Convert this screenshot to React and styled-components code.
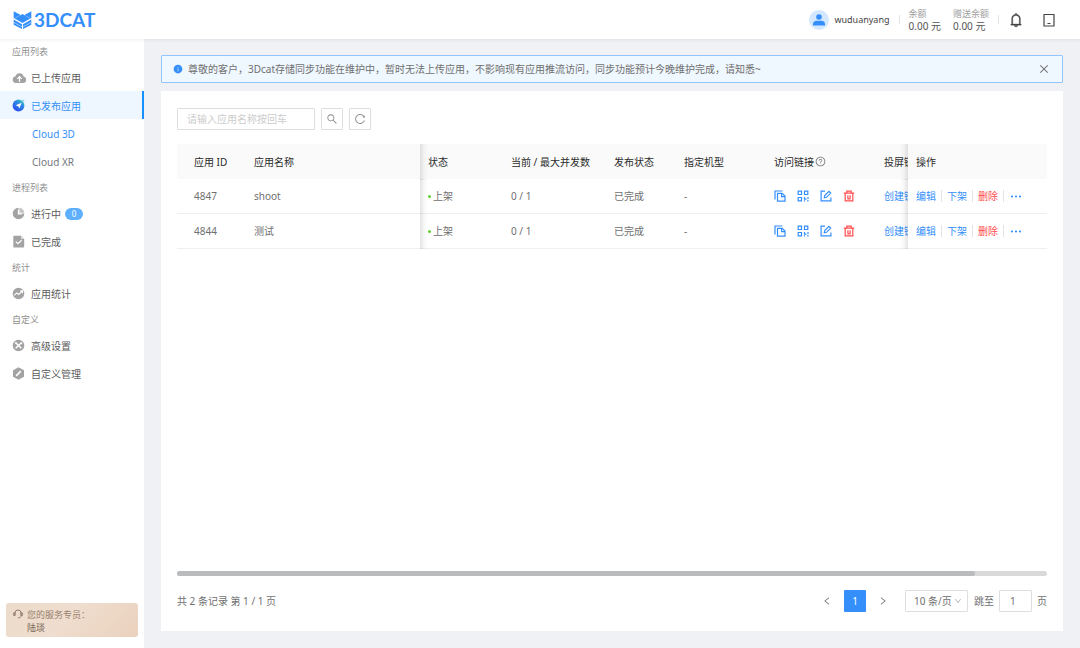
import React from "react";
import styled, { createGlobalStyle, css } from "styled-components";
import {
  AiFillInfoCircle,
  AiOutlineBell,
  AiOutlineClose,
  AiOutlineDown,
  AiOutlineLeft,
  AiOutlineQuestionCircle,
  AiOutlineReload,
  AiOutlineRight,
  AiOutlineSearch,
} from "react-icons/ai";

const blue = "#348ffb";
const red = "#ff4d4f";

const GlobalStyle = createGlobalStyle`
  *, *::before, *::after { box-sizing: border-box; }
  body {
    margin: 0;
    background: #eff1f5;
    color: #707070;
    font-family: "Noto Sans", "Noto Sans CJK SC", sans-serif;
    font-size: 10px;
    line-height: 16px;
  }
  button, input, select { font: inherit; color: inherit; }
  button { border: 0; padding: 0; background: none; cursor: pointer; }
  a { color: inherit; text-decoration: none; }
  svg { display: block; flex: none; }
  h1, h2, ul, p { margin: 0; padding: 0; font: inherit; list-style: none; }
`;

const Page = styled.div`
  display: flex;
  flex-direction: column;
  min-height: 100vh;
`;

const Header = styled.header`
  display: flex;
  align-items: center;
  justify-content: space-between;
  height: 39px;
  padding: 0 23px 0 13px;
  background: #fff;
  box-shadow: 0 1px 3px rgba(0, 21, 41, 0.08);
  z-index: 3;
`;

const Logo = styled.a`
  display: flex;
  align-items: center;
  gap: 2px;
  color: ${blue};
  font: 700 19px/24px Lato, sans-serif;
`;

const HeaderTools = styled.div`
  display: flex;
  align-items: center;
`;

const User = styled.a`
  display: flex;
  align-items: center;
  gap: 5px;
  color: #444;
  font-size: 9px;
`;

const Avatar = styled.span`
  display: grid;
  place-items: center;
  width: 20px;
  height: 20px;
  border-radius: 50%;
  background: #d3e7fe;
  color: ${blue};
`;

const Divider = styled.span`
  flex: none;
  width: 1px;
  height: ${(p) => p.$height || 9}px;
  margin: 0 ${(p) => p.$space}px;
  background: #e4e4e4;
`;

const Balance = styled.dl`
  margin: 0;
  color: #555;
  & + & { margin-left: 12px; }
`;

const BalanceLabel = styled.dt`
  color: #a0a0a0;
  font-size: 9px;
  line-height: 13px;
`;

const BalanceValue = styled.dd`
  margin: 0;
  line-height: 13px;
`;

const ToolButton = styled.button`
  color: #444;
  & + & { margin-left: 17px; }
`;

const Body = styled.div`
  display: flex;
  flex: 1;
`;

const Sidebar = styled.nav`
  display: flex;
  flex-direction: column;
  justify-content: space-between;
  flex: none;
  width: 144px;
  padding-bottom: 11px;
  background: #fff;
`;

const GroupTitle = styled.h2`
  padding: 2px 0 0 12px;
  color: #909090;
  font-size: 9px;
  line-height: 22px;
`;

const MenuLink = styled.a`
  display: flex;
  align-items: center;
  gap: 6px;
  height: 28px;
  padding: 1px 0 0 ${(p) => (p.$sub ? 32 : 12)}px;
  color: ${(p) => (p.$active ? blue : p.$sub ? "#74777d" : "#5c5c5c")};
  ${(p) =>
    p.$active &&
    !p.$sub &&
    css`
      background: #eef7ff;
      border-right: 2px solid #1890ff;
    `}
`;

const IconBox = styled.span`
  display: grid;
  place-items: center;
  width: 13px;
  height: 13px;
`;

const Count = styled.span`
  width: 18px;
  height: 12px;
  margin-left: -2px;
  border-radius: 6px;
  background: #5eb0ff;
  color: #fff;
  font-size: 8px;
  line-height: 12px;
  text-align: center;
`;

const Agent = styled.aside`
  display: flex;
  gap: 4px;
  height: 34px;
  margin: 0 6px;
  padding: 5px 7px;
  border-radius: 3px;
  background: linear-gradient(135deg, #ecdaca 0%, #efdecf 48%, #efdccc 49%, #ead1bd 100%);
  color: #967f6c;
  font-size: 9px;
  line-height: 13px;
`;

const AgentName = styled.p`
  color: #7a6757;
`;

const Main = styled.main`
  display: flex;
  flex: 1;
  flex-direction: column;
  gap: 8px;
  min-width: 0;
  padding: 16px 17px 17px;
`;

const Notice = styled.div`
  display: flex;
  align-items: center;
  gap: 5px;
  height: 28px;
  padding: 0 12px 0 11px;
  border: 1px solid #93c5fa;
  border-radius: 1px;
  background: #eff7ff;
`;

const NoticeText = styled.p`
  flex: 1;
`;

const Card = styled.section`
  display: flex;
  flex: 1;
  flex-direction: column;
  padding: 17px 16px 19px;
  background: #fff;
`;

const Toolbar = styled.form`
  display: flex;
  gap: 6px;
  margin-bottom: 14px;
`;

const box = css`
  height: 22px;
  border: 1px solid #dedede;
  border-radius: 1px;
  background: #fff;
`;

const SearchInput = styled.input`
  ${box}
  width: 138px;
  padding: 0 9px;
  &::placeholder { color: #ccc; }
`;

const SquareButton = styled.button`
  ${box}
  display: grid;
  place-items: center;
  width: 22px;
  color: #8c8c8c;
`;

const TableScroll = styled.div`
  flex: 1;
  overflow: hidden;
`;

const Table = styled.table`
  width: 100%;
  min-width: 950px;
  table-layout: fixed;
  border-spacing: 0;
  text-align: left;
  white-space: nowrap;
`;

const cell = css`
  height: 35px;
  padding: 0 8px;
  &:first-child { padding-left: 17px; }
  ${(p) => p.$fixed && "position: sticky; z-index: 1;"}
  ${(p) => p.$fixed === "id" && "left: 0;"}
  ${(p) =>
    p.$fixed === "name" &&
    css`
      left: 69px;
      &::after {
        content: "";
        position: absolute;
        inset: 0 -8px -1px auto;
        width: 8px;
        background: linear-gradient(90deg, rgba(0, 0, 0, 0.11), rgba(0, 0, 0, 0.03) 50%, transparent);
      }
    `}
  ${(p) =>
    p.$fixed === "actions" &&
    css`
      right: 0;
      &::before {
        content: "";
        position: absolute;
        inset: 0 auto -1px -8px;
        width: 8px;
        background: linear-gradient(270deg, rgba(0, 0, 0, 0.11), rgba(0, 0, 0, 0.03) 50%, transparent);
      }
    `}
`;

const Th = styled.th`
  ${cell}
  background: #fafafa;
  color: #2b2b2b;
  font-weight: 400;
`;

const Td = styled.td`
  ${cell}
  border-bottom: 1px solid #efefef;
  background: #fff;
`;

const Inline = styled.div`
  display: flex;
  align-items: center;
  gap: ${(p) => p.$gap || 0}px;
`;

const Dot = styled.span`
  width: 3px;
  height: 3px;
  border-radius: 50%;
  background: #5fd02e;
`;

const Action = styled.button`
  color: ${(p) => (p.$danger ? red : blue)};
`;

const Track = styled.div`
  height: 5px;
  margin-bottom: 14px;
  border-radius: 3px;
  background: #d9d9d9;
`;

const Thumb = styled.div`
  width: calc(100% * 11 / 12);
  height: 100%;
  border-radius: 3px;
  background: #b9bbbd;
`;

const Footer = styled.footer`
  display: flex;
  align-items: center;
  justify-content: space-between;
`;

const PageButton = styled.button`
  display: grid;
  place-items: center;
  width: 22px;
  height: 22px;
  border-radius: 1px;
  ${(p) => p.$current && `background: ${blue}; color: #fff;`}
`;

const SizePicker = styled.label`
  display: grid;
  align-items: center;
  margin-left: 5px;
  & > * { grid-area: 1 / 1; }
  & > svg {
    justify-self: end;
    margin-right: 6px;
    color: #aaa;
    pointer-events: none;
  }
`;

const Select = styled.select`
  ${box}
  width: 63px;
  padding: 0 8px;
  appearance: none;
`;

const PageInput = styled.input`
  ${box}
  width: 33px;
  margin: 0 5px;
  padding: 0 10px;
`;

const LogoMark = () => (
  <svg width="19" height="18" viewBox="0 0 57 54" fill="currentColor">
    <path d="M2 1 23 12 2 23z" />
    <path d="M55 1v22L34 12z" />
    <path d="M28.500 9 52 22.500 28.500 36 5 22.500z" />
    <path d="M2 25.500 27 39.500V54L2 41z" />
    <path d="M55 25.500 30 39.500V54L55 41z" />
    <path d="M2 34 27 47.500M55 34 30 47.500" stroke="#fff" strokeWidth="1.500" />
  </svg>
);

const gray = "#a3a3a3";

const icons = {
  upload: (
    <svg width="15" height="14" viewBox="0 0 15 14">
      <path d="M3.500 5.200A4.200 4.200 0 0 1 11.600 5.600a3.300 3.300 0 0 1-.4 6.500H3.700A3.500 3.500 0 0 1 3.500 5.200z" fill={gray} />
      <path d="M7.500 11V6M5.300 7.800 7.500 5.600l2.200 2.200" stroke="#fff" strokeWidth="1.200" fill="none" />
    </svg>
  ),
  publish: (
    <svg width="13" height="13" viewBox="0 0 13 13">
      <defs>
        <linearGradient id="publish" x1="1" y1="0" x2="0.300" y2="1">
          <stop offset="0" stopColor="#3ce0b0" />
          <stop offset="0.450" stopColor="#2f86e6" />
          <stop offset="1" stopColor="#2b4ff0" />
        </linearGradient>
      </defs>
      <circle cx="6.500" cy="6.500" r="5.900" fill="url(#publish)" />
      <path d="M9.600 3.800 7.400 9.400 6.200 7.200 3.600 6.200z" fill="#fff" />
      <circle cx="11.200" cy="1.800" r="1.300" fill="#a5dcf5" />
    </svg>
  ),
  running: (
    <svg width="13" height="13" viewBox="0 0 13 13">
      <path d="M7.300 .7v5h5A5.800 5.800 0 0 0 7.300 .7z" fill="#c4c4c4" />
      <path d="M6.500 .7a5.800 5.800 0 1 0 5.800 5.800H6.500z" fill={gray} />
      <path d="M6.500 3v3.900h3.300" stroke="#fff" strokeWidth="1.300" fill="none" />
    </svg>
  ),
  done: (
    <svg width="13" height="13" viewBox="0 0 13 13">
      <path d="M2.200 .8H9l3.200 3.200v7.600a.9.900 0 0 1-.9.900H2.200a.9.900 0 0 1-.9-.9V1.700A.9.900 0 0 1 2.200 .8z" fill={gray} />
      <path d="M9 .8l3.200 3.200H9z" fill="#dcdcdc" />
      <path d="M3.800 6.600 6 8.700l3.600-3.500" stroke="#fff" strokeWidth="1.200" fill="none" />
    </svg>
  ),
  stats: (
    <svg width="13" height="13" viewBox="0 0 13 13">
      <circle cx="6.500" cy="6.500" r="5.800" fill={gray} />
      <path d="M2.200 8.300 4.700 5.900l1.900 1.600 3.600-3.200M8.200 3.900h2.300v2.300" stroke="#fff" strokeWidth="1.100" fill="none" />
    </svg>
  ),
  advanced: (
    <svg width="13" height="13" viewBox="0 0 13 13">
      <circle cx="6.500" cy="6.500" r="5.800" fill={gray} />
      <path d="M3.700 3.700l5.600 5.600M9.300 3.700 3.700 9.300" stroke="#fff" strokeWidth="1.500" />
      <path d="M3 3l2 .3L3.300 5zM10.200 2.800v2.400L7.900 5z" fill="#fff" />
    </svg>
  ),
  custom: (
    <svg width="13" height="13" viewBox="0 0 13 13">
      <path d="M6.500 .3 12 3.300v6.400l-5.500 3L1 9.700V3.300z" fill={gray} />
      <path d="M4.200 8.800 8.800 4.200" stroke="#fff" strokeWidth="1.700" />
    </svg>
  ),
};

const LineIcon = ({ size = 12, children }) => (
  <svg
    width={size}
    height={size}
    viewBox={`0 0 ${size} ${size}`}
    fill="none"
    stroke="currentColor"
    strokeWidth="1.200"
  >
    {children}
  </svg>
);

const CopyIcon = () => (
  <LineIcon>
    <path d="M1 9.500V1h7.500" />
    <path d="M3.500 3.300h4.700l2.800 2.800v5.100H3.500z" />
    <path d="M7.600 3.500v3.100H11" />
  </LineIcon>
);

const QrIcon = () => (
  <LineIcon>
    <path d="M1.200 1.200h3.300v3.300H1.200zM7.500 1.200h3.300v3.300H7.500zM1.200 7.500h3.300v3.300H1.200z" />
    <path d="M7.500 6.900v2.300h2M11 6.900v2M7.500 10.200v1.400M10.900 10v1.600" />
  </LineIcon>
);

const EditIcon = () => (
  <LineIcon>
    <path d="M5 1.100H1.100v9.800h9.800V7.500" />
    <path d="M4.300 7.800l.4-2.200 4.200-4.300 1.800 1.800-4.200 4.200z" />
  </LineIcon>
);

const TrashIcon = () => (
  <LineIcon>
    <path d="M.8 3.200h10.400M3.800 3V1.200h4.400V3M2.200 3.200v7.700h7.600V3.200M4.900 5.200v3.600M7.100 5.200v3.600M4.400 8.800h3.200" />
  </LineIcon>
);

const MoreIcon = () => (
  <svg width="14" height="12" viewBox="0 0 14 12" fill="currentColor">
    <circle cx="3" cy="6.500" r="1.100" />
    <circle cx="7" cy="6.500" r="1.100" />
    <circle cx="11" cy="6.500" r="1.100" />
  </svg>
);

const TabletIcon = () => (
  <LineIcon size={16}>
    <path d="M3 2.500h10v11.500H3zM6.500 11.500h3" strokeLinejoin="round" />
  </LineIcon>
);

const HeadsetIcon = () => (
  <svg width="10" height="12" viewBox="0 0 10 12" fill="none" stroke="currentColor" strokeWidth="1">
    <path d="M2 7.500V5a3 3 0 0 1 6 0v2.500c0 1.700-1 2.300-3 2.300" />
    <path d="M1.900 4.700H.7v2.800h1.200zM8.100 4.700h1.200v2.800H8.100z" />
  </svg>
);

const menu = [
  {
    title: "应用列表",
    items: [
      { label: "已上传应用", icon: "upload" },
      { label: "已发布应用", icon: "publish", active: true },
      { label: "Cloud 3D", sub: true, active: true },
      { label: "Cloud XR", sub: true },
    ],
  },
  {
    title: "进程列表",
    items: [
      { label: "进行中", icon: "running", count: 0 },
      { label: "已完成", icon: "done" },
    ],
  },
  { title: "统计", items: [{ label: "应用统计", icon: "stats" }] },
  {
    title: "自定义",
    items: [
      { label: "高级设置", icon: "advanced" },
      { label: "自定义管理", icon: "custom" },
    ],
  },
];

const balances = [
  ["余额", "0.00 元"],
  ["赠送余额", "0.00 元"],
];

const columnWidths = [69, undefined, 83, 103, 70, 90, 110, 112, 139];

const apps = [
  { id: 4847, name: "shoot" },
  { id: 4844, name: "测试" },
];

const AppRow = ({ app }) => (
  <tr>
    <Td $fixed="id">{app.id}</Td>
    <Td $fixed="name">{app.name}</Td>
    <Td>
      <Inline $gap={2}>
        <Dot />
        上架
      </Inline>
    </Td>
    <Td>0 / 1</Td>
    <Td>已完成</Td>
    <Td>-</Td>
    <Td>
      <Inline $gap={11}>
        <Action aria-label="复制"><CopyIcon /></Action>
        <Action aria-label="二维码"><QrIcon /></Action>
        <Action aria-label="修改"><EditIcon /></Action>
        <Action $danger aria-label="删除链接"><TrashIcon /></Action>
      </Inline>
    </Td>
    <Td><Action>创建链接</Action></Td>
    <Td $fixed="actions">
      <Inline>
        <Action>编辑</Action>
        <Divider $space={5} $height={12} />
        <Action>下架</Action>
        <Divider $space={5} $height={12} />
        <Action $danger>删除</Action>
        <Divider $space={5} $height={12} />
        <Action aria-label="更多"><MoreIcon /></Action>
      </Inline>
    </Td>
  </tr>
);

export default function App() {
  return (
    <Page>
      <GlobalStyle />
      <Header>
        <Logo href="#">
          <LogoMark />
          3DCAT
        </Logo>
        <HeaderTools>
          <User href="#">
            <Avatar>
              <svg width="12" height="12" viewBox="0 0 12 12" fill="currentColor">
                <circle cx="6" cy="3" r="2.800" />
                <path d="M0 11.500V10c0-2 2-3.200 3.500-3.200h5C10 6.800 12 8 12 10v1.500z" />
              </svg>
            </Avatar>
            wuduanyang
          </User>
          <Divider $space={9} />
          {balances.map(([label, value]) => (
            <Balance key={label}>
              <BalanceLabel>{label}</BalanceLabel>
              <BalanceValue>{value}</BalanceValue>
            </Balance>
          ))}
          <Divider $space={9} />
          <ToolButton aria-label="通知">
            <AiOutlineBell size={16} stroke="currentColor" strokeWidth={20} />
          </ToolButton>
          <ToolButton aria-label="设备"><TabletIcon /></ToolButton>
        </HeaderTools>
      </Header>
      <Body>
        <Sidebar>
          <div>
            {menu.map((group) => (
              <div key={group.title}>
                <GroupTitle>{group.title}</GroupTitle>
                <ul>
                  {group.items.map((item) => (
                    <li key={item.label}>
                      <MenuLink href="#" $sub={item.sub} $active={item.active}>
                        {item.icon && <IconBox>{icons[item.icon]}</IconBox>}
                        {item.label}
                        {item.count !== undefined && <Count>{item.count}</Count>}
                      </MenuLink>
                    </li>
                  ))}
                </ul>
              </div>
            ))}
          </div>
          <Agent>
            <HeadsetIcon />
            <div>
              <p>您的服务专员：</p>
              <AgentName>陆琰</AgentName>
            </div>
          </Agent>
        </Sidebar>
        <Main>
          <Notice role="alert">
            <AiFillInfoCircle size={10} color={blue} />
            <NoticeText>
              尊敬的客户，3Dcat存储同步功能在维护中，暂时无法上传应用，不影响现有应用推流访问，同步功能预计今晚维护完成，请知悉~
            </NoticeText>
            <button aria-label="关闭"><AiOutlineClose size={12} /></button>
          </Notice>
          <Card>
            <Toolbar onSubmit={(e) => e.preventDefault()}>
              <SearchInput aria-label="应用名称" placeholder="请输入应用名称按回车" />
              <SquareButton aria-label="搜索"><AiOutlineSearch size={12} /></SquareButton>
              <SquareButton type="button" aria-label="刷新"><AiOutlineReload size={12} /></SquareButton>
            </Toolbar>
            <TableScroll>
              <Table>
                <colgroup>
                  {columnWidths.map((width, i) => (
                    <col key={i} width={width} />
                  ))}
                </colgroup>
                <thead>
                  <tr>
                    <Th $fixed="id">应用 ID</Th>
                    <Th $fixed="name">应用名称</Th>
                    <Th>状态</Th>
                    <Th>当前 / 最大并发数</Th>
                    <Th>发布状态</Th>
                    <Th>指定机型</Th>
                    <Th>
                      <Inline $gap={1}>
                        访问链接
                        <AiOutlineQuestionCircle size={11} color="#777" />
                      </Inline>
                    </Th>
                    <Th>投屏链接</Th>
                    <Th $fixed="actions">操作</Th>
                  </tr>
                </thead>
                <tbody>
                  {apps.map((app) => (
                    <AppRow key={app.id} app={app} />
                  ))}
                </tbody>
              </Table>
            </TableScroll>
            <Track>
              <Thumb />
            </Track>
            <Footer>
              <span>共 2 条记录 第 1 / 1 页</span>
              <Inline $gap={6}>
                <PageButton aria-label="上一页"><AiOutlineLeft size={10} /></PageButton>
                <PageButton $current>1</PageButton>
                <PageButton aria-label="下一页"><AiOutlineRight size={10} /></PageButton>
                <SizePicker>
                  <Select aria-label="每页条数" defaultValue="10">
                    <option value="10">10 条/页</option>
                    <option value="20">20 条/页</option>
                  </Select>
                  <AiOutlineDown size={8} />
                </SizePicker>
                <label>
                  跳至
                  <PageInput defaultValue="1" />
                  页
                </label>
              </Inline>
            </Footer>
          </Card>
        </Main>
      </Body>
    </Page>
  );
}
